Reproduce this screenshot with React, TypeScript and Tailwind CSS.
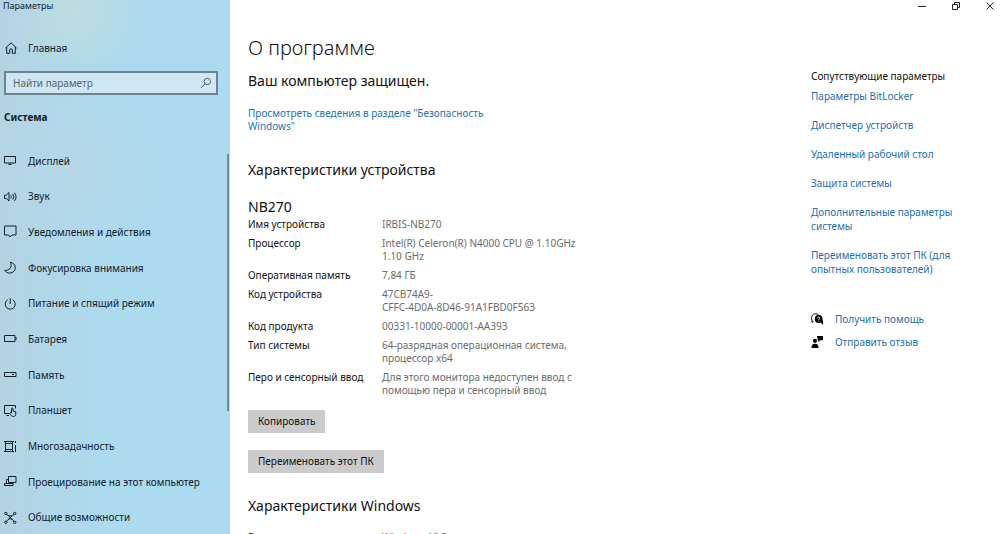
import type { ReactNode } from "react";

function Icon({ children }: { children: ReactNode }) {
  return (
    <svg
      viewBox="0 0 14 14"
      className="size-3.5 shrink-0"
      fill="none"
      stroke="currentColor"
      strokeWidth="1"
      aria-hidden="true"
    >
      {children}
    </svg>
  );
}

const navItems: { label: string; icon: ReactNode }[] = [
  {
    label: "Дисплей",
    icon: <path d="M.5 2.500h11v6.500H.5zM6 9v1.500M4.500 10.500h3" />,
  },
  {
    label: "Звук",
    icon: (
      <path d="M.5 5.200h1.700L5 2.500v8.500L2.200 8.400H.5zM6.800 5.300q1.200 1.500 0 3M8.700 4q2.200 2.800 0 5.600M10.500 2.700q3.100 4.100 0 8.200" />
    ),
  },
  {
    label: "Уведомления и действия",
    icon: <path d="M.5 1h11.500v9H8L6.200 12 4.500 10H.5z" />,
  },
  {
    label: "Фокусировка внимания",
    icon: (
      <path d="M6.500 1.200c2.900.6 4.800 2.800 4.800 5.500 0 3-2.500 5.400-5.600 5.400-2.200 0-4-1.100-5-2.700 4.400.3 7.900-3 5.800-8.200z" />
    ),
  },
  {
    label: "Питание и спящий режим",
    icon: <path d="M3.700 2.800a5 5 0 1 0 5 0M6.200 1v6" />,
  },
  {
    label: "Батарея",
    icon: <path d="M.5 3.500h10.500v6H.5zM12 5v3" />,
  },
  {
    label: "Память",
    icon: <path d="M.5 4.500h11.500v4H.5zM8 6.500h2" />,
  },
  {
    label: "Планшет",
    icon: (
      <>
        <path d="M5 9.500H.5v-8h11v3M2.500 11.500H5" />
        <path d="M7.500 9V4.800c0-1.100 1.500-1.100 1.500 0V7l2.700.7v2.600c0 1.300-.8 2.200-2.200 2.200-1.500 0-2.500-.7-4-3.300.5-.8 1.200-.7 2-.2z" />
      </>
    ),
  },
  {
    label: "Многозадачность",
    icon: (
      <path d="M1.500 3.500h7v6h-7zM0 1.500h10M0 11.500h10M1.500 1v2.500M8.500 1v2.500M1.500 9.500V12M8.500 9.500V12M11.500 1v2M11.500 5v7" />
    ),
  },
  {
    label: "Проецирование на этот компьютер",
    icon: <path d="M4.500 1.500H12v6H4.500zM4.500 4.500h-2v4M.5 10.500H9V8.500H.5zM9 7.500v1" />,
  },
  {
    label: "Общие возможности",
    icon: (
      <>
        <path d="M2.500 3.300C4.500 5.300 8 5.300 10 3.300M2.500 10.700C4.500 6.800 8 6.800 10 10.700M4 4.300 8.500 9M8.500 4.300 4 9" />
        <circle cx="1.800" cy="2.500" r="1.200" />
        <circle cx="10.700" cy="2.500" r="1.200" />
        <circle cx="1.800" cy="11.300" r="1.200" />
        <circle cx="10.700" cy="11.300" r="1.200" />
      </>
    ),
  },
];

const deviceSpecs = [
  ["Имя устройства", "IRBIS-NB270"],
  ["Процессор", "Intel(R) Celeron(R) N4000 CPU @ 1.10GHz 1.10 GHz"],
  ["Оперативная память", "7,84 ГБ"],
  ["Код устройства", "47CB74A9-\nCFFC-4D0A-8D46-91A1FBD0F563"],
  ["Код продукта", "00331-10000-00001-AA393"],
  ["Тип системы", "64-разрядная операционная система,\nпроцессор x64"],
  ["Перо и сенсорный ввод", "Для этого монитора недоступен ввод с\nпомощью пера и сенсорный ввод"],
];

const windowsSpecs = [["Выпуск", "Windows 10 Pro"]];

const relatedLinks = [
  "Параметры BitLocker",
  "Диспетчер устройств",
  "Удаленный рабочий стол",
  "Защита системы",
  "Дополнительные параметры системы",
  "Переименовать этот ПК (для опытных пользователей)",
];

function SpecTable({ rows }: { rows: string[][] }) {
  return (
    <table className="mt-px w-[335px] table-fixed text-left text-[10px] leading-[13px]">
      <tbody>
        {rows.map(([name, value]) => (
          <tr key={name} className="align-top">
            <th scope="row" className="w-[134px] pb-1.5 font-normal whitespace-nowrap">
              {name}
            </th>
            <td className="pb-1.5 whitespace-pre-line text-[#6b6b6b]">{value}</td>
          </tr>
        ))}
      </tbody>
    </table>
  );
}

function Sidebar() {
  return (
    <aside className="relative flex w-[230px] shrink-0 flex-col bg-[#acdaee] bg-[radial-gradient(circle_at_75px_10px,#bfdcdf_0,transparent_70px),radial-gradient(circle_at_70px_170px,#b6d7e8_0,transparent_90px),linear-gradient(to_right,#b4d3e2,#acdaee_45%)] pb-[7px] text-[#10222c]">
      <div className="h-3 px-[3px] text-[9px] leading-3">Параметры</div>
      <a href="#home" className="mt-[27px] flex h-[18px] items-center gap-2.5 px-1 text-[10px]">
        <Icon>
          <path d="M1.500 7 7 1.800 12.500 7M2.700 6v6.300h3V8.800q0-1 1.300-1t1.300 1v3.500h3V6" />
        </Icon>
        Главная
      </a>
      <div className="mt-3.5 mr-3 ml-1 flex h-6 items-center border-2 border-[#6c8390] bg-[#cfe7f5] pr-1">
        <input
          type="text"
          aria-label="Найти параметр"
          placeholder="Найти параметр"
          className="min-w-0 flex-1 bg-transparent px-[7px] text-[10px] outline-none placeholder:text-[#52646f]"
        />
        <svg viewBox="0 0 12 12" className="size-3 text-[#52646f]" fill="none" stroke="currentColor">
          <circle cx="7.300" cy="4.500" r="3.200" />
          <path d="M5 6.800 1.200 10.800" />
        </svg>
      </div>
      <h2 className="mt-3.5 px-1 text-[10px] leading-4 font-bold">Система</h2>
      <nav className="mt-[27px] flex flex-1 flex-col justify-between">
        {navItems.map((item) => (
          <a
            key={item.label}
            href="#system"
            className="flex h-[18px] items-center gap-2.5 px-1 text-[10px] whitespace-nowrap"
          >
            <Icon>{item.icon}</Icon>
            {item.label}
          </a>
        ))}
      </nav>
      <div className="absolute top-[154px] right-px h-[257px] w-0.5 bg-[#718c9b]" />
    </aside>
  );
}

function WindowControls() {
  return (
    <div className="absolute top-0 right-0 flex h-3 gap-[22px] pr-1 text-[#222]">
      <button type="button" aria-label="Свернуть" className="size-3">
        <svg viewBox="0 0 12 12" fill="none" stroke="currentColor">
          <path d="M2 6.500h8" />
        </svg>
      </button>
      <button type="button" aria-label="Восстановить" className="size-3">
        <svg viewBox="0 0 12 12" fill="none" stroke="currentColor">
          <path d="M2.500 4.500h5v5h-5zM4.500 4.500v-2h5v5h-2" />
        </svg>
      </button>
      <button type="button" aria-label="Закрыть" className="size-3">
        <svg viewBox="0 0 12 12" fill="none" stroke="currentColor">
          <path d="m2.500 2.500 7 7m0-7-7 7" />
        </svg>
      </button>
    </div>
  );
}

export default function App() {
  return (
    <div className="relative flex h-screen overflow-hidden bg-white font-['Noto_Sans','Open_Sans',sans-serif] text-[#111]">
      <Sidebar />
      <WindowControls />
      <main className="min-w-0 flex-1 pt-[34px] pl-[18px]">
        <h1 className="text-[20px] leading-7 font-light">О программе</h1>
        <p className="mt-[9px] text-[14px] leading-5">Ваш компьютер защищен.</p>
        <a href="#security" className="mt-4 block w-[250px] text-[10px] leading-[13px] text-[#1b74b4]">
          Просмотреть сведения в разделе "Безопасность Windows"
        </a>
        <h2 className="mt-[27px] text-[14px] leading-5">Характеристики устройства</h2>
        <h3 className="mt-[17px] text-[14px] leading-5">NB270</h3>
        <SpecTable rows={deviceSpecs} />
        <div className="mt-[7px] flex flex-col items-start gap-[17px]">
          <button type="button" className="h-[23px] bg-[#cbcbcb] px-2.5 text-[10px]">
            Копировать
          </button>
          <button type="button" className="h-[23px] bg-[#cbcbcb] px-2.5 text-[10px]">
            Переименовать этот ПК
          </button>
        </div>
        <h2 className="mt-[23px] mb-[15px] text-[14px] leading-5">Характеристики Windows</h2>
        <SpecTable rows={windowsSpecs} />
      </main>
      <aside className="w-[189px] shrink-0 pt-[69px] text-[10px] leading-[14px] text-[#1b6fb0]">
        <h2 className="text-[#111]">Сопутствующие параметры</h2>
        <div className="mt-1.5 flex w-[150px] flex-col gap-[15px]">
          {relatedLinks.map((label) => (
            <a key={label} href="#related">
              {label}
            </a>
          ))}
        </div>
        <div className="mt-9 flex flex-col gap-[9px]">
          <a href="#help" className="flex items-center gap-3">
            <svg viewBox="0 0 12 12" className="size-3 text-black" fill="none" stroke="currentColor">
              <path d="M2.500 8.500 1 9.500V7C-.3 4 1.500.8 4.500.8c1.500 0 2.500.6 3.200 1.400" />
              <circle cx="7.700" cy="6" r="3.900" fill="currentColor" stroke="none" />
              <path d="M9 8.500 12 12V7z" fill="currentColor" stroke="none" />
              <path d="M6.500 5.200c0-1.700 2.400-1.500 2.400 0 0 .8-1.200.8-1.200 1.800M7.700 7.700v.9" stroke="white" strokeWidth=".8" />
            </svg>
            Получить помощь
          </a>
          <a href="#feedback" className="flex items-center gap-3">
            <svg viewBox="0 0 12 12" className="size-3 text-black" fill="currentColor">
              <circle cx="4" cy="4.800" r="2.100" />
              <path d="M.5 12c0-3 1-4.300 3.500-4.300S7.500 9 7.500 12zM6 0h6v4.300H9.300L7.300 6V4.300H6.800z" />
            </svg>
            Отправить отзыв
          </a>
        </div>
      </aside>
    </div>
  );
}
